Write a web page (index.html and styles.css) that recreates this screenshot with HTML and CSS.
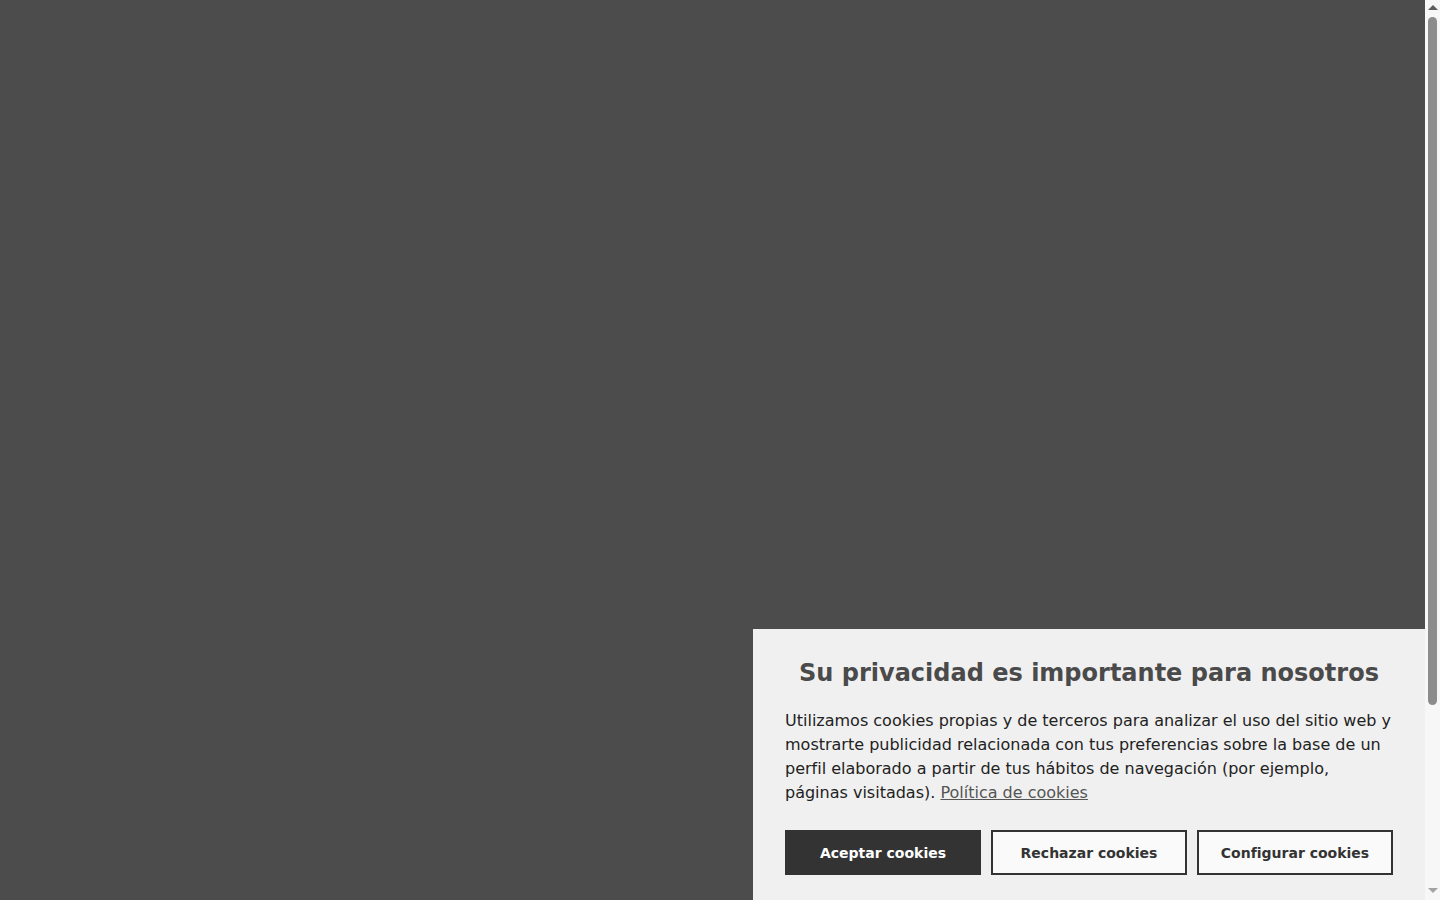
FILE: index.html
```html
<!DOCTYPE html>
<html lang="es">
<head>
<meta charset="utf-8">
<title>Cookies</title>
<link rel="stylesheet" href="styles.css">
</head>
<body>
<div class="overlay"></div>
<div class="scrollbar" aria-hidden="true">
  <span class="scroll-arrow scroll-up"></span>
  <span class="scroll-thumb"></span>
  <span class="scroll-arrow scroll-down"></span>
</div>
<section class="cookie-panel">
  <h2 class="cookie-title">Su privacidad es importante para nosotros</h2>
  <p class="cookie-text">Utilizamos cookies propias y de terceros para analizar el uso del sitio web y mostrarte publicidad relacionada con tus preferencias sobre la base de un perfil elaborado a partir de tus hábitos de navegación (por ejemplo, páginas visitadas). <a href="#" class="cookie-link">Política de cookies</a></p>
  <div class="cookie-actions">
    <button class="btn btn-primary">Aceptar cookies</button>
    <button class="btn btn-outline">Rechazar cookies</button>
    <button class="btn btn-outline">Configurar cookies</button>
  </div>
</section>
</body>
</html>
```
FILE: styles.css
```css
html, body {
  margin: 0;
  padding: 0;
  height: 100%;
  overflow: hidden;
}
body {
  background: #ffffff;
  font-family: "DejaVu Sans", sans-serif;
}
.overlay {
  position: fixed;
  inset: 0;
  background: rgba(0, 0, 0, 0.7);
}
.scrollbar {
  position: fixed;
  top: 0;
  right: 0;
  bottom: 0;
  width: 15px;
  background: #f7f7f7;
  display: flex;
  flex-direction: column;
  align-items: center;
}
.scroll-arrow {
  width: 0;
  height: 0;
  border-left: 5px solid transparent;
  border-right: 5px solid transparent;
}
.scroll-up {
  margin-top: 5px;
  border-bottom: 5px solid #5c5c5c;
}
.scroll-down {
  margin-top: auto;
  margin-bottom: 7px;
  border-top: 5px solid #a3a3a3;
}
.scroll-thumb {
  margin-top: 7px;
  width: 9px;
  height: 688px;
  border-radius: 5px;
  background: #8c8c8c;
}
.cookie-panel {
  position: fixed;
  right: 15px;
  bottom: 0;
  width: 672px;
  box-sizing: border-box;
  padding: 30px 32px 25px;
  background: #f0f0f0;
}
.cookie-title {
  margin: 0 0 22px;
  font-size: 24px;
  line-height: 28px;
  font-weight: bold;
  color: #4a4a4a;
  text-align: center;
}
.cookie-text {
  margin: 0 0 25px;
  font-size: 16px;
  line-height: 24px;
  color: #222222;
}
.cookie-link {
  color: #555555;
  text-decoration: underline;
}
.cookie-actions {
  display: flex;
  gap: 10px;
}
.btn {
  flex: 1 1 0;
  height: 45px;
  box-sizing: border-box;
  font-family: "DejaVu Sans", sans-serif;
  font-size: 14px;
  font-weight: bold;
  border: 2px solid #333333;
  cursor: pointer;
}
.btn-primary {
  background: #333333;
  color: #ffffff;
}
.btn-outline {
  background: #fafafa;
  color: #333333;
}
```
